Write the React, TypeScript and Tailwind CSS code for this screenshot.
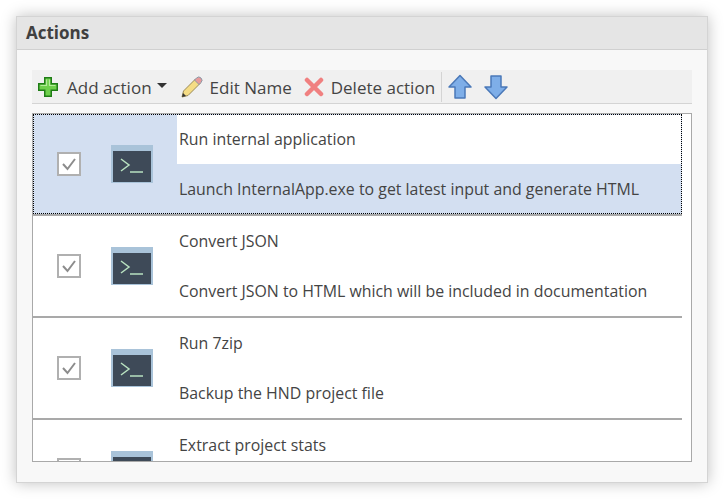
const actions = [
  { name: 'Run internal application', desc: 'Launch InternalApp.exe to get latest input and generate HTML', selected: true },
  { name: 'Convert JSON', desc: 'Convert JSON to HTML which will be included in documentation', selected: false },
  { name: 'Run 7zip', desc: 'Backup the HND project file', selected: false },
  { name: 'Extract project stats', desc: 'Count topics and words in the project', selected: false },
];

function PlusIcon() {
  return (
    <svg width="20" height="20" viewBox="0 0 20 20" className="shrink-0">
      <path d="M6.750 0.750h6.500v6h6v6.500h-6v6h-6.500v-6h-6v-6.500h6z" fill="#6fd04c" stroke="#1f7d16" strokeWidth="1.500" />
      <path d="M8.500 2.500v6h-6M11.500 2.500v6h6" fill="none" stroke="#b5ec9c" strokeWidth="1.200" />
    </svg>
  );
}

function PencilIcon() {
  return (
    <svg width="24" height="24" viewBox="0 0 24 24" className="shrink-0">
      <path d="M3 22l1.500-6L16.500 4l4.500 4.500L9 20.500z" fill="#f5dc84" stroke="#9a8a58" strokeWidth="1" />
      <path d="M15.500 5L20 9.500l2-2a3 3 0 0 0-4.500-4.500z" fill="#e89a9a" stroke="#8a99a8" strokeWidth="1" />
      <path d="M3 22l1-4 3 3z" fill="#333333" />
    </svg>
  );
}

function DeleteIcon() {
  return (
    <svg width="20" height="20" viewBox="0 0 20 20" className="shrink-0">
      <path d="M3 3l14 14M17 3L3 17" stroke="#f08080" strokeWidth="4.500" strokeLinecap="round" />
    </svg>
  );
}

function ArrowIcon({ down }: { down?: boolean }) {
  return (
    <svg width="24" height="26" viewBox="0 0 24 26" className={down ? 'shrink-0 rotate-180' : 'shrink-0'}>
      <path d="M12 1.500L23 13h-6v11H7V13H1z" fill="#7eaee8" stroke="#4a78b8" strokeWidth="1.500" strokeLinejoin="round" />
    </svg>
  );
}

function TerminalIcon() {
  return (
    <div className="w-[42px] h-[38px] shrink-0 bg-[#a9c3d9] px-[2px] pb-[1px] pt-[6px]">
      <div className="w-full h-full bg-[#3e4a58]">
        <svg width="38" height="31" viewBox="0 0 38 31">
          <path d="M8 8l8 6-8 6" fill="none" stroke="#b9e2c0" strokeWidth="1.500" />
          <path d="M17 21h13" stroke="#b9e2c0" strokeWidth="1.500" />
        </svg>
      </div>
    </div>
  );
}

function CheckBox() {
  return (
    <div className="w-6 h-6 shrink-0 bg-white border-2 border-[#b0b0b0] flex items-center justify-center">
      <svg width="16" height="14" viewBox="0 0 16 14">
        <path d="M2 7l4.500 5L14 2" fill="none" stroke="#8c8c8c" strokeWidth="2" />
      </svg>
    </div>
  );
}

function ActionRow({ name, desc, selected }: { name: string; desc: string; selected: boolean }) {
  return (
    <div className="h-[102px] shrink-0 border-b-2 border-[#a9a9a9]">
      <div className={selected ? 'h-[100px] flex bg-[#d3dff1] border border-dotted border-black' : 'h-[100px] flex border border-transparent'}>
        <div className="w-[143px] shrink-0 flex items-center pl-[23px] gap-[30px]">
          <CheckBox />
          <TerminalIcon />
        </div>
        <div className="flex-1 flex flex-col">
          <div className={selected ? 'h-[49px] bg-white pl-[2px] pt-[13px] leading-[22px]' : 'h-[49px] pl-[2px] pt-[13px] leading-[22px]'}>{name}</div>
          <div className="pl-[2px] pt-[14px] leading-[22px]">{desc}</div>
        </div>
      </div>
    </div>
  );
}

export default function App() {
  return (
    <div className="w-[725px] h-[500px] bg-white p-4 overflow-hidden font-['Open_Sans',sans-serif] text-[15.900px] text-[#444444]">
      <div className="w-[692px] h-[467px] bg-[#f8f8f8] border border-[#d4d4d4] shadow-[0_0_14px_rgba(0,0,0,0.25)] flex flex-col">
        <div className="h-[33px] shrink-0 bg-[#e5e5e5] border-b border-[#d0d0d0] pl-[9px] flex items-center font-bold text-[17px] text-[#404040]">
          Actions
        </div>
        <div className="flex-1 flex flex-col px-[15px] pt-5 pb-5 min-h-0">
          <div className="h-[34px] shrink-0 bg-[#f0f0f0] border-b border-[#d4d4d4] flex items-center pl-[6px] text-[17px]">
            <PlusIcon />
            <span className="ml-[9px] pt-[2px]">Add action</span>
            <span className="ml-[5px] mb-[3px] w-0 h-0 border-x-[5px] border-x-transparent border-t-[5px] border-t-[#333333]" />
            <span className="ml-[12px]"><PencilIcon /></span>
            <span className="ml-[7px] pt-[2px]">Edit Name</span>
            <span className="ml-[12px]"><DeleteIcon /></span>
            <span className="ml-[7px] pt-[2px]">Delete action</span>
            <span className="ml-[6px] w-px h-[30px] bg-[#d4d4d4]" />
            <span className="ml-[6px]"><ArrowIcon /></span>
            <span className="ml-[12px]"><ArrowIcon down /></span>
          </div>
          <div className="mt-[9px] flex-1 min-h-0 bg-white border border-[#a9a9a9] pr-[9px] flex flex-col overflow-hidden">
            {actions.map((a) => (
              <ActionRow key={a.name} name={a.name} desc={a.desc} selected={a.selected} />
            ))}
          </div>
        </div>
      </div>
    </div>
  );
}
